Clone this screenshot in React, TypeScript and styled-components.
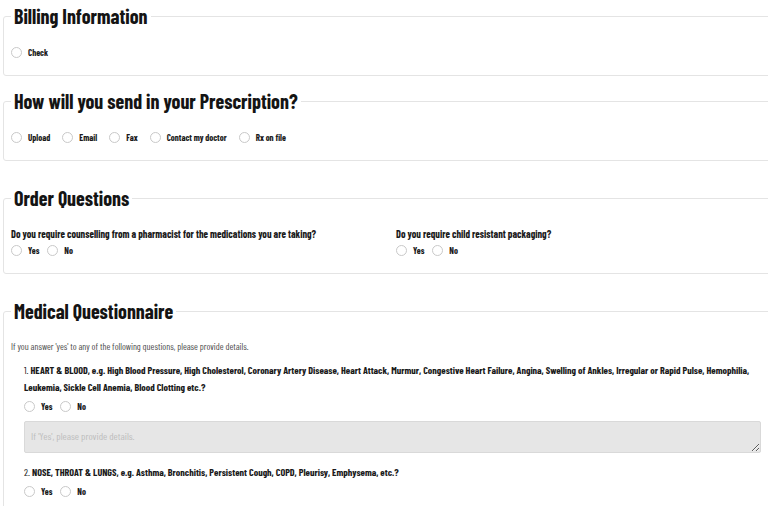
import React from "react";
import styled, { createGlobalStyle } from "styled-components";

const FONT = `"Barlow Condensed", "Roboto Condensed", "Liberation Sans Narrow", "DejaVu Sans Condensed", "Liberation Sans", sans-serif`;

const GlobalStyle = createGlobalStyle`
  html, body { margin: 0; padding: 0; background: #ffffff; overflow: hidden; }
  body { font-family: ${FONT}; color: #1a1a1a; }
  * { box-sizing: border-box; }
`;

const Page = styled.div`
  display: flex;
  flex-direction: column;
  padding: 5px 0 0 3px;
  width: 800px;
`;

const Section = styled.fieldset<{ $gap: number }>`
  margin: ${(p) => p.$gap}px 0 0 0;
  width: 786px;
  border: 1px solid #e4e4e4;
  border-radius: 3px;
  padding: 0 7px 15px 7px;
  min-width: 0;
`;

const Legend = styled.legend`
  padding: 0 3px;
  font-family: ${FONT};
  font-weight: 700;
  font-size: 20px;
  line-height: 22px;
  color: #141414;
`;

const Body = styled.div`
  padding-top: 17px;
`;

const RadioRow = styled.div<{ $gap?: number; $top?: number }>`
  display: flex;
  align-items: center;
  gap: ${(p) => p.$gap ?? 12}px;
  height: 16px;
  margin-top: ${(p) => p.$top ?? 0}px;
`;

const Option = styled.label`
  display: flex;
  align-items: center;
  gap: 6px;
  font-size: 9px;
  font-weight: 700;
  color: #1a1a1a;
`;

const Circle = styled.span`
  width: 11px;
  height: 11px;
  border-radius: 50%;
  border: 1px solid #c9c9c9;
  background: #fff;
  flex: none;
`;

const Columns = styled.div`
  display: grid;
  grid-template-columns: 385px 1fr;
`;

const Question = styled.div`
  font-size: 10.3px;
  font-weight: 700;
  line-height: 16px;
  color: #1a1a1a;
`;

const Intro = styled.div`
  font-size: 9.4px;
  line-height: 16px;
  color: #4a4a4a;
  margin-bottom: 7px;
`;

const Item = styled.div<{ $first?: boolean }>`
  padding: 0 20px 0 13px;
  margin-top: ${(p) => (p.$first ? 0 : 11)}px;
`;

const ItemText = styled.div`
  font-size: 10.1px;
  font-weight: 700;
  line-height: 17px;
  color: #1a1a1a;
`;

const Num = styled.span`
  font-weight: 400;
`;

const Details = styled.textarea`
  display: block;
  width: 100%;
  height: 32px;
  margin-top: 7px;
  background: #e6e6e6;
  border: 1px solid #d9d9d9;
  border-radius: 2px;
  padding: 8px 6px;
  font-family: ${FONT};
  font-size: 10.3px;
  color: #333;
  resize: vertical;
  &::placeholder { color: #bdbdbd; }
`;

function Radio({ label }: { label: string }) {
  return (
    <Option>
      <Circle />
      {label}
    </Option>
  );
}

function YesNo({ top }: { top?: number }) {
  return (
    <RadioRow $gap={8} $top={top}>
      <Radio label="Yes" />
      <Radio label="No" />
    </RadioRow>
  );
}

const items = [
  {
    n: "1.",
    text:
      "HEART & BLOOD, e.g. High Blood Pressure, High Cholesterol, Coronary Artery Disease, Heart Attack, Murmur, Congestive Heart Failure, Angina, Swelling of Ankles, Irregular or Rapid Pulse, Hemophilia, Leukemia, Sickle Cell Anemia, Blood Clotting etc.?",
  },
  {
    n: "2.",
    text:
      "NOSE, THROAT & LUNGS, e.g. Asthma, Bronchitis, Persistent Cough, COPD, Pleurisy, Emphysema, etc.?",
  },
];

export default function App() {
  return (
    <>
      <GlobalStyle />
      <Page>
        <Section $gap={0}>
          <Legend>Billing Information</Legend>
          <Body>
            <RadioRow>
              <Radio label="Check" />
            </RadioRow>
          </Body>
        </Section>

        <Section $gap={14}>
          <Legend>How will you send in your Prescription?</Legend>
          <Body>
            <RadioRow>
              <Radio label="Upload" />
              <Radio label="Email" />
              <Radio label="Fax" />
              <Radio label="Contact my doctor" />
              <Radio label="Rx on file" />
            </RadioRow>
          </Body>
        </Section>

        <Section $gap={26}>
          <Legend>Order Questions</Legend>
          <Body>
            <Columns>
              <div>
                <Question>
                  Do you require counselling from a pharmacist for the medications you are taking?
                </Question>
                <YesNo />
              </div>
              <div>
                <Question>Do you require child resistant packaging?</Question>
                <YesNo />
              </div>
            </Columns>
          </Body>
        </Section>

        <Section $gap={26}>
          <Legend>Medical Questionnaire</Legend>
          <Body>
            <Intro>If you answer 'yes' to any of the following questions, please provide details.</Intro>
            {items.map((it, i) => (
              <Item key={it.n} $first={i === 0}>
                <ItemText>
                  <Num>{it.n}</Num> {it.text}
                </ItemText>
                <YesNo top={2} />
                <Details placeholder="If 'Yes', please provide details." />
              </Item>
            ))}
          </Body>
        </Section>
      </Page>
    </>
  );
}
